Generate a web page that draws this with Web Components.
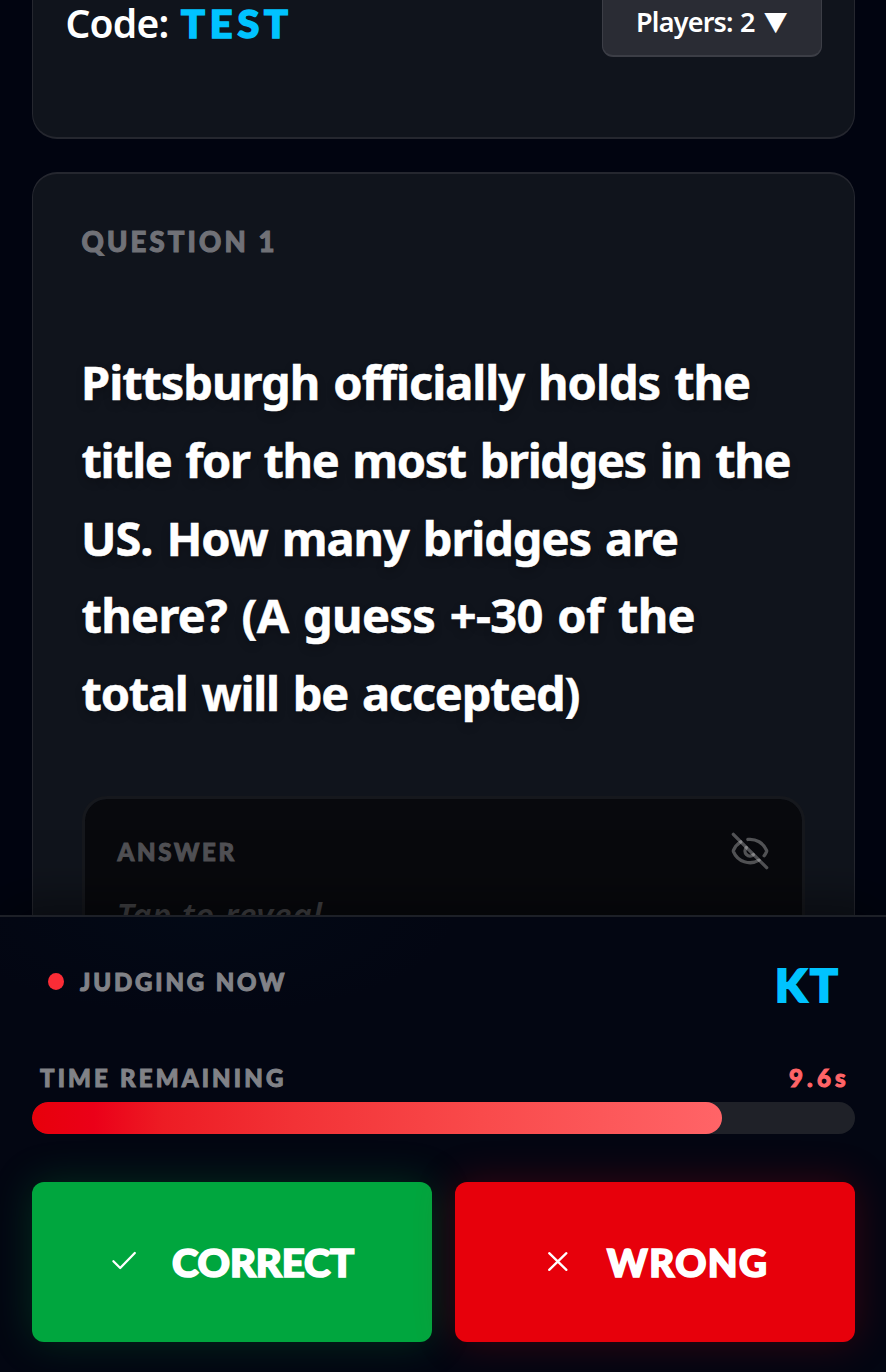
<!DOCTYPE html>
<html lang="en">
<head>
<meta charset="utf-8">
<title>Judge panel</title>
<style>
html,body{margin:0;height:1372px;overflow:hidden;background:#010410;font-family:"Noto Sans","Open Sans",sans-serif;color:#fff;--black:Lato,"Noto Sans",sans-serif}
</style>
</head>
<body>
<judge-app></judge-app>
<script>
const define = (name, html) => customElements.define(name, class extends HTMLElement {
  constructor(){ super(); this.attachShadow({mode:'open'}).innerHTML = html; }
});

// A single line of text spaced out to an exact ink width; sx widens the glyphs.
customElements.define('fit-text', class extends HTMLElement {
  connectedCallback(){
    const root = this.attachShadow({mode:'open'});
    root.innerHTML = '<style>:host{display:block;white-space:nowrap;flex:none}span{display:inline-block;vertical-align:top;transform-origin:0 0}</style><span><slot></slot></span>';
    const cs = getComputedStyle(this), w = +this.getAttribute('w'), sx = +(this.getAttribute('sx') || 1), text = this.textContent;
    const ws = parseFloat(cs.wordSpacing) || 0;
    const ctx = document.createElement('canvas').getContext('2d');
    ctx.font = `${cs.fontStyle} ${cs.fontWeight} ${cs.fontSize} ${cs.fontFamily}`;
    const m = ctx.measureText(text);
    const ink = m.actualBoundingBoxLeft + m.actualBoundingBoxRight + ws * (text.split(' ').length - 1);
    this.style.width = w + 'px';
    const span = root.querySelector('span');
    span.style.letterSpacing = (w / sx - ink) / (text.length - 1) + 'px';
    span.style.marginLeft = m.actualBoundingBoxLeft * sx + 'px';
    if (sx !== 1) span.style.transform = `scaleX(${sx})`;
  }
});

define('players-button', `<style>
:host{display:flex;align-items:flex-start;box-sizing:border-box;width:220px;height:57px;padding:4px 0 0 35px;gap:9.5px;
 background:#2a2c34;border:solid #3c3e46;border-width:0 1px 2px;border-radius:0 0 11px 11px;font-size:27px;line-height:36px;font-weight:600;word-spacing:1px}
i{font:normal 28px/36px "DejaVu Sans",sans-serif;transform:translateY(-1px) scale(1.06,.95)}
</style><fit-text w="117">Players: 2</fit-text><i>▼</i>`);

define('room-header', `<style>
:host{display:flex;justify-content:space-between;align-items:flex-start;box-sizing:border-box;height:139px;padding:0 32px 0 34.5px;
 background:#10141c;border:solid #25272f;border-width:0 1px 2px;border-radius:0 0 25px 25px}
.code{display:flex;gap:13px;padding-top:3px;font-size:39px;line-height:40px;font-weight:600}
.v{font-family:var(--black);font-weight:900;color:#00c3ff;-webkit-text-stroke:1.6px #00c3ff;font-size:38px}
</style><div class="code"><fit-text w="100">Code:</fit-text><fit-text class="v" sx="1.04" w="107">TEST</fit-text></div><players-button></players-button>`);

define('answer-card', `<style>
:host{display:block;box-sizing:border-box;height:220px;width:723px;padding:31.5px 32px;background:#08090d;background-clip:padding-box;border:3px solid #16181d;border-radius:25px}
.row{display:flex;align-items:center;justify-content:space-between;height:40px}
.l{font-family:var(--black);padding-top:2px;font-size:24px;line-height:28px;font-weight:900;color:#505054;-webkit-text-stroke:1px #505054}
.t{margin:24px 0 0 2px;font-size:33px;line-height:40px;font-weight:600;font-style:italic;color:#434346}
svg{display:block;width:40px;height:40px;fill:none;stroke:rgba(255,255,255,.3);stroke-width:2;stroke-linecap:round;stroke-linejoin:round}
</style><div class="row"><fit-text class="l" w="118">ANSWER</fit-text>
<svg viewBox="0 0 24 24"><path d="M10.733 5.076a10.744 10.744 0 0 1 11.205 6.575 1 1 0 0 1 0 .696 10.747 10.747 0 0 1-1.444 2.49"/><path d="M14.084 14.158a3 3 0 0 1-4.242-4.242"/><path d="M17.479 17.499a10.75 10.75 0 0 1-15.417-5.151 1 1 0 0 1 0-.696 10.75 10.75 0 0 1 4.446-5.143"/><path d="m2 2 20 20"/></svg></div>
<fit-text class="t" w="205">Tap to reveal</fit-text>`);

define('question-card', `<style>
:host{display:block;box-sizing:border-box;padding:53.5px 48px 0 48.5px;background:#10141c;border:solid #25272f;border-width:2px 1px;border-radius:25px;height:900px}
.n{font-family:var(--black);font-size:27.5px;line-height:28px;font-weight:900;color:#707177;-webkit-text-stroke:1.1px #707177}
.q{margin:88.5px 0 0 1px;font-size:47px;line-height:77.8px;font-weight:700;word-spacing:3px;-webkit-text-stroke:.5px #fff;text-shadow:0 4px 8px rgba(0,0,0,.25)}
.c{margin-left:2.5px}
answer-card{margin-top:63.5px}
</style><fit-text class="n" w="192">QUESTION 1</fit-text>
<div class="q"><fit-text class="c" w="664">Pittsburgh officially holds the</fit-text><fit-text w="707">title for the most bridges in the</fit-text><fit-text class="c" w="592">US. How many bridges are</fit-text><fit-text w="611">there? (A guess +-30 of the</fit-text><fit-text w="497">total will be accepted)</fit-text></div>
<answer-card></answer-card>`);

define('time-bar', `<style>
:host{display:block}
.row{display:flex;justify-content:space-between;padding:0 10px 0 8px;font-family:var(--black);font-size:24px;line-height:28px;font-weight:900;color:#818287;-webkit-text-stroke:1px}
.s{color:#ff6467}
.track{height:31.5px;margin-top:10px;border-radius:16px;background:#1f2128;overflow:hidden}
.fill{width:690px;height:100%;border-radius:16px;background:linear-gradient(90deg,#e7000b 0%,#eb0018 9%,#ed1c24 19%,#f23236 38%,#f94a4b 65%,#ff6467 100%)}
</style><div class="row"><fit-text w="243">TIME REMAINING</fit-text><fit-text class="s" w="56">9.6s</fit-text></div><div class="track"><div class="fill"></div></div>`);

define('verdict-button', `<style>
:host{display:flex;box-sizing:border-box;width:400px;height:160px;border-radius:12px;font-family:var(--black);font-size:38.5px;line-height:48px;font-weight:900;padding-top:56.5px;-webkit-text-stroke:1.7px #fff}
:host([kind=yes]){background:#00a63e;box-shadow:0 0 42px rgba(0,166,62,.24);padding-left:78px;gap:34px}
:host([kind=no]){background:#e7000b;box-shadow:0 0 42px rgba(231,0,11,.24);padding-left:89px;gap:34px}
svg{width:29px;height:29px;margin-top:8.5px;fill:none;stroke:#fff;stroke-width:2.3;stroke-linecap:round;stroke-linejoin:round}
:host([kind=yes]) .x,:host([kind=no]) .c{display:none}
</style><svg class="c" viewBox="0 0 29 29"><path d="M3.4 14.2 10.2 21 24.8 6"/></svg><svg class="x" viewBox="0 0 29 29"><path d="M5.2 6.2 22.4 22.9M22.4 6.2 5.2 22.9"/></svg><slot></slot>`);

define('judge-dock', `<style>
:host{display:block;box-sizing:border-box;position:relative;height:457px;padding:48px 31px 0 32px;border-top:2px solid #1d2027;
 background:radial-gradient(260px 100px at 200px 0,rgba(0,60,80,.06),transparent) #030612;box-shadow:0 -10px 50px rgba(0,0,0,.5)}
.top{display:flex;align-items:flex-start;height:40px;padding:0 17px 0 16px}
.dot{width:16px;height:17px;border-radius:50%;background:#fb2c36;margin:8px 16px 0 0}
.j{font-family:var(--black);font-size:24px;line-height:28px;margin-top:2.5px;font-weight:900;color:#818287;-webkit-text-stroke:1px #818287}
.k{font-family:var(--black);margin:0 0 0 auto;font-size:46px;line-height:40px;font-weight:900;color:#00c3ff;-webkit-text-stroke:2px #00c3ff}
time-bar{margin-top:59px}
.b{display:flex;justify-content:space-between;margin-top:48px}
</style><div class="top"><span class="dot"></span><fit-text class="j" w="205">JUDGING NOW</fit-text><fit-text class="k" w="60">KT</fit-text></div>
<time-bar></time-bar>
<div class="b"><verdict-button kind="yes"><fit-text sx="1.04" w="181">CORRECT</fit-text></verdict-button><verdict-button kind="no"><fit-text w="159">WRONG</fit-text></verdict-button></div>`);

define('judge-app', `<style>
:host{display:flex;flex-direction:column;height:1372px;overflow:hidden}
main{flex:none;height:915px;box-sizing:border-box;padding:0 31px 0 32px;overflow:hidden}
question-card{margin-top:33px}
judge-dock{flex:none}
</style><main><room-header></room-header><question-card></question-card></main><judge-dock></judge-dock>`);
</script>
</body>
</html>
